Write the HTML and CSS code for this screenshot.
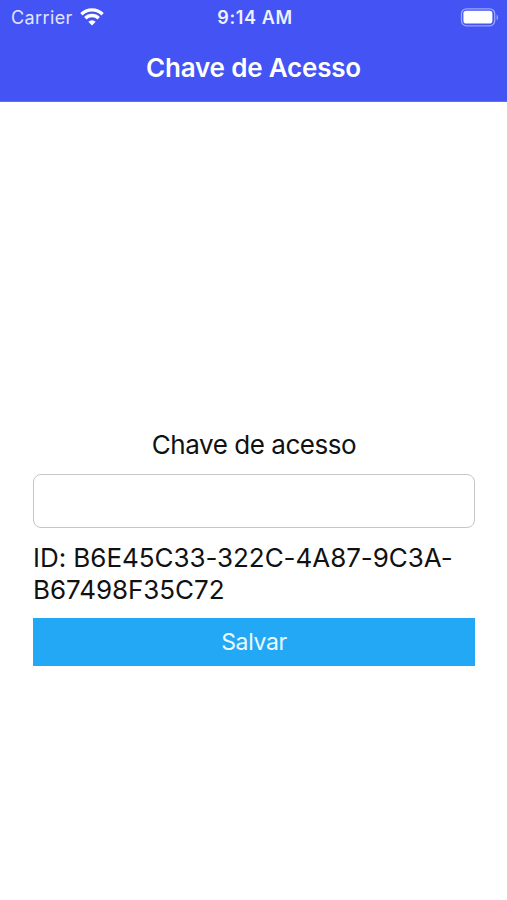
FILE: index.html
```
<!DOCTYPE html>
<html lang="pt-BR">
<head>
  <meta charset="UTF-8">
  <meta name="viewport" content="width=device-width, initial-scale=1">
  <title>Chave de Acesso</title>
  <link rel="stylesheet" href="styles.css">
</head>
<body>

  <header class="header">
    <div class="status-bar">
      <div class="carrier">
        <span class="carrier-name">Carrier</span>
        <svg class="wifi" width="24" height="18" viewBox="0 0 24 18">
          <path d="M1.4 6.2a15.2 15.2 0 0 1 21.2 0" />
          <path d="M5.3 10.2a9.6 9.6 0 0 1 13.4 0" />
          <path class="dot" d="M12 17.4l-3.7-3.7a5.2 5.2 0 0 1 7.4 0z" />
        </svg>
      </div>
      <span class="time">9:14 AM</span>
      <svg class="battery" width="39" height="19" viewBox="0 0 39 19">
        <rect class="outline" x="1.5" y="0.8" width="33.2" height="17" rx="5" />
        <rect x="3.4" y="2.8" width="29" height="12.8" rx="2.8" />
        <path class="tip" d="M36.6 6.4c2 .8 2 5 0 5.8z" />
      </svg>
    </div>
    <h1 class="title">Chave de Acesso</h1>
  </header>

  <main class="content">
    <form class="key-form">
      <label class="label" for="access-key">Chave de acesso</label>
      <input class="input" type="text" id="access-key">
      <p class="device-id">ID: B6E45C33-322C-4A87-9C3A-<br>B67498F35C72</p>
      <button class="save" type="button">Salvar</button>
    </form>
  </main>

</body>
</html>
```

FILE: styles.css
```
* {
  box-sizing: border-box;
}
body {
  font-family: Inter, "Liberation Sans", sans-serif;
  background: #ffffff;
  color: #111111;
  margin: 0;
  height: 100vh;
  display: flex;
  flex-direction: column;
}
.header {
  flex: none;
  height: 102px;
  background: #4353f4;
  border-bottom: 1px solid #5f6ff6;
  color: #ffffff;
}
.status-bar {
  display: grid;
  grid-template-columns: 1fr auto 1fr;
  align-items: center;
  height: 34px;
  padding: 0 8px 0 11px;
}
.carrier {
  display: flex;
  align-items: center;
  gap: 7px;
}
.carrier-name {
  font-size: 18px;
  letter-spacing: 0.4px;
  color: #e2e5ff;
}
.wifi {
  fill: none;
  stroke: #ffffff;
  stroke-width: 3.3;
}
.wifi .dot {
  fill: #ffffff;
  stroke: none;
}
.time {
  font-size: 18px;
  font-weight: 600;
  letter-spacing: 0.6px;
  color: #eef0ff;
}
.battery {
  justify-self: end;
  fill: #ffffff;
}
.battery .outline {
  fill: none;
  stroke: #9ca6fa;
  stroke-width: 1.3;
}
.battery .tip {
  fill: #9ca6fa;
}
.title {
  margin: 0;
  font-size: 26px;
  font-weight: 600;
  letter-spacing: -0.2px;
  line-height: 67px;
  text-align: center;
}
.content {
  flex: 1;
  display: flex;
  flex-direction: column;
  justify-content: center;
  padding: 93px 32px 0 33px;
}
.key-form {
  display: flex;
  flex-direction: column;
}
.label {
  font-size: 26px;
  letter-spacing: -0.45px;
  line-height: 32px;
  text-align: center;
}
.input {
  height: 54px;
  margin-top: 13px;
  padding: 0 12px;
  border: 1.5px solid #c6c6c6;
  border-radius: 8px;
  background: #ffffff;
  font: inherit;
  font-size: 24px;
}
.device-id {
  margin: 14px 0 12px;
  font-size: 26px;
  letter-spacing: -0.05px;
  line-height: 32px;
}
.save {
  height: 48px;
  padding: 0;
  border: none;
  background: #23a8f5;
  color: #eefaff;
  font: inherit;
  font-size: 23px;
  letter-spacing: -0.35px;
}
```
